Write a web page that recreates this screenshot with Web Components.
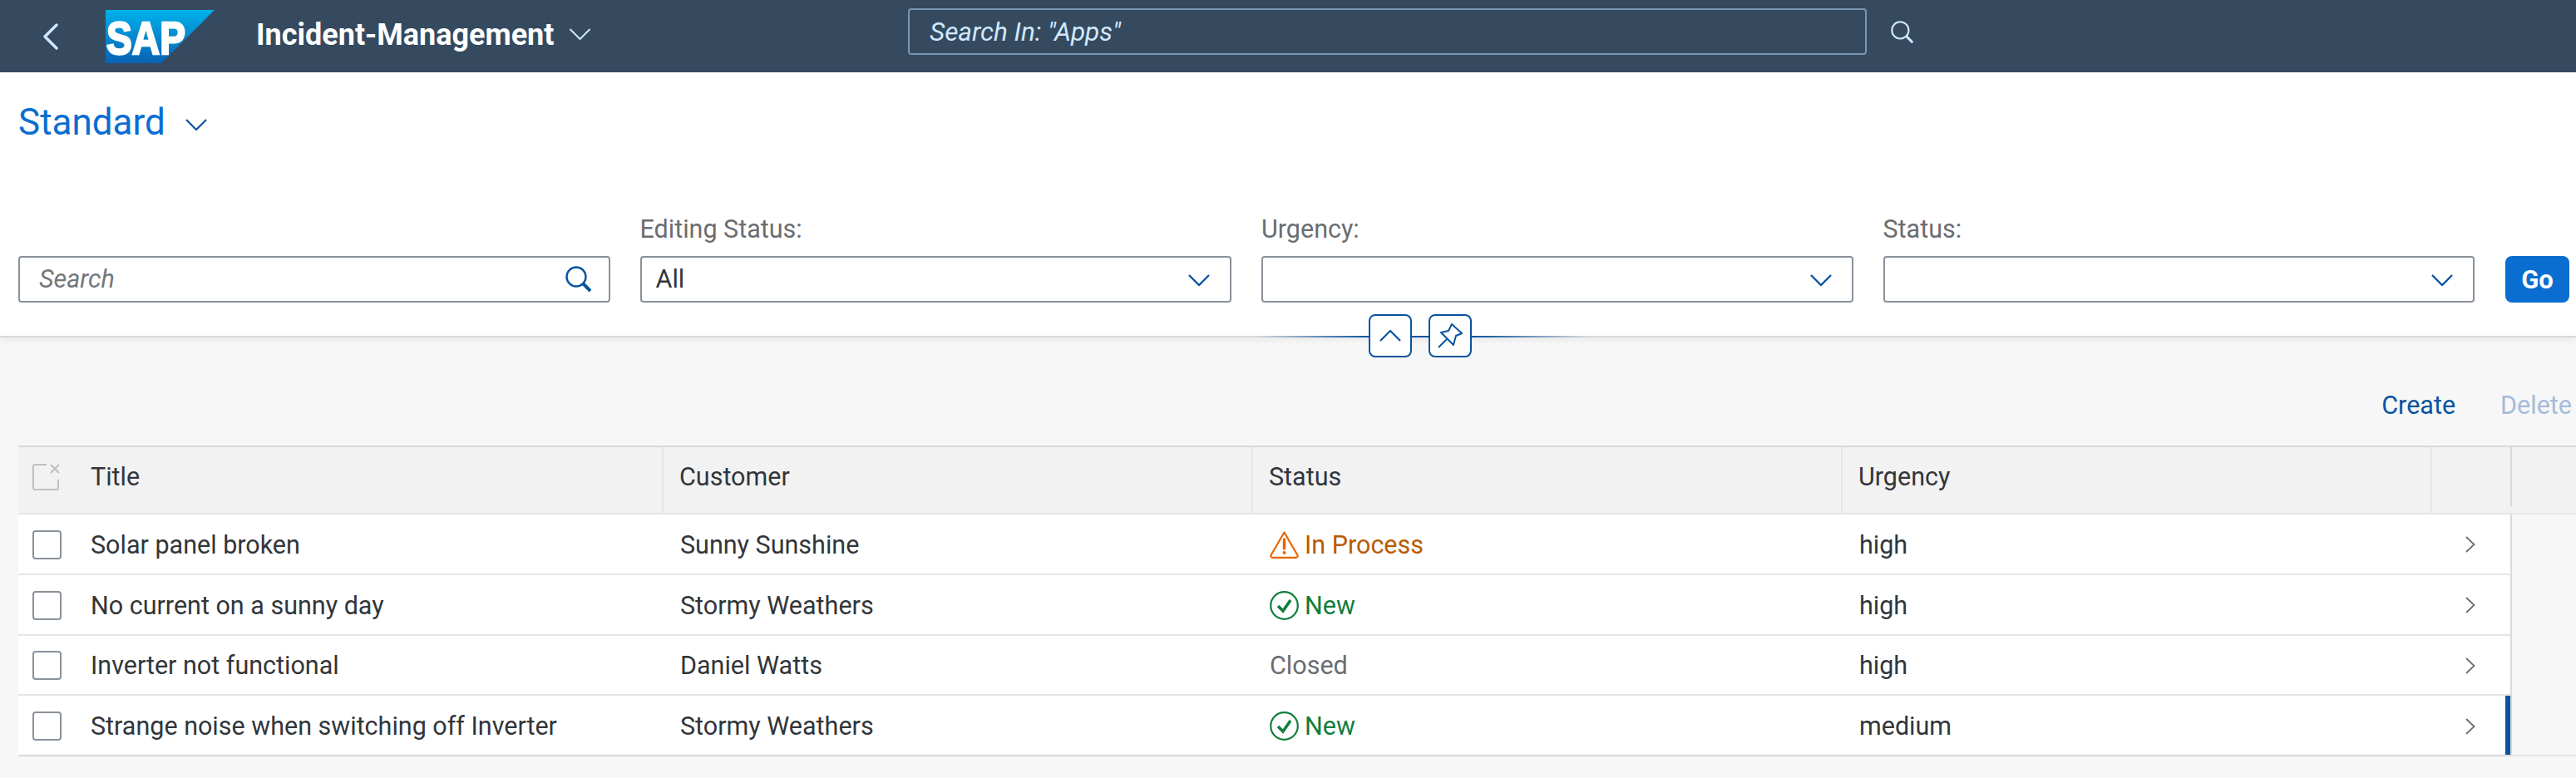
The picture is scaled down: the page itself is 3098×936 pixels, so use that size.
<!DOCTYPE html>
<html lang="en">
<head>
<meta charset="utf-8">
<title>Incident-Management</title>
<style>
    html, body { margin: 0; width: 3098px; height: 936px; overflow: hidden; background: #f7f7f7; }
    body { font-family: Roboto, "Liberation Sans", sans-serif; font-size: 30.5px; color: #32363a; }
</style>
</head>
<body>
<im-shell-bar app-title="Incident-Management" placeholder='Search In: "Apps"'></im-shell-bar>
<im-filter-header>
    <im-variant slot="variant">Standard</im-variant>
    <im-field slot="filters" placeholder="Search" icon="search"></im-field>
    <im-field slot="filters" label="Editing Status:" value="All" icon="down"></im-field>
    <im-field slot="filters" label="Urgency:" icon="down"></im-field>
    <im-field slot="filters" label="Status:" icon="down"></im-field>
</im-filter-header>
<im-toolbar></im-toolbar>
<im-table>
    <im-row head>
        <im-cell sel><im-check disabled></im-check></im-cell>
        <im-cell>Title</im-cell>
        <im-cell sep>Customer</im-cell>
        <im-cell sep>Status</im-cell>
        <im-cell sep>Urgency</im-cell>
        <im-cell sep></im-cell>
    </im-row>
    <im-row>
        <im-cell sel><im-check></im-check></im-cell>
        <im-cell>Solar panel broken</im-cell>
        <im-cell>Sunny Sunshine</im-cell>
        <im-cell><im-status type="warning">In Process</im-status></im-cell>
        <im-cell>high</im-cell>
        <im-cell><im-nav></im-nav></im-cell>
    </im-row>
    <im-row>
        <im-cell sel><im-check></im-check></im-cell>
        <im-cell>No current on a sunny day</im-cell>
        <im-cell>Stormy Weathers</im-cell>
        <im-cell><im-status type="success">New</im-status></im-cell>
        <im-cell>high</im-cell>
        <im-cell><im-nav></im-nav></im-cell>
    </im-row>
    <im-row>
        <im-cell sel><im-check></im-check></im-cell>
        <im-cell>Inverter not functional</im-cell>
        <im-cell>Daniel Watts</im-cell>
        <im-cell><im-status>Closed</im-status></im-cell>
        <im-cell>high</im-cell>
        <im-cell><im-nav></im-nav></im-cell>
    </im-row>
    <im-row highlight>
        <im-cell sel><im-check></im-check></im-cell>
        <im-cell>Strange noise when switching off Inverter</im-cell>
        <im-cell>Stormy Weathers</im-cell>
        <im-cell><im-status type="success">New</im-status></im-cell>
        <im-cell>medium</im-cell>
        <im-cell><im-nav></im-nav></im-cell>
    </im-row>
</im-table>

<script>
const icons = {
    search: (c, w) => `<svg viewBox="0 0 32 32" width="32" height="32" fill="none" stroke="${c}" stroke-width="${w}"><ellipse cx="13" cy="13" rx="11.5" ry="11.5"/><path d="M21 21l9 9" stroke-width="${w + 1.5}"/></svg>`,
    down: (c, w = 2.4) => `<svg viewBox="0 0 26 14" width="26" height="14" fill="none" stroke="${c}" stroke-width="${w}"><path d="M1 1l12 12L25 1"/></svg>`
};

class ImShellBar extends HTMLElement {
    constructor() {
        super();
        const title = this.getAttribute("app-title");
        const placeholder = this.getAttribute("placeholder");
        this.attachShadow({mode: "open"}).innerHTML = `
            <style>
                :host { display: flex; align-items: center; height: 87px; background: #354a5f; color: #fff; }
                #left { display: flex; align-items: center; flex: none; width: 1092px; }
                #back { width: 18px; height: 32px; margin-left: 52px; }
                #logo { width: 131px; height: 64px; margin-left: 57px; }
                #logo text { font-family: "Liberation Sans", sans-serif; font-weight: 700; }
                h1 { margin: -4px 0 0 50px; font-size: 36px; font-weight: 700; line-height: 40px; }
                #menu { margin-left: 18px; margin-top: -6px; }
                #search { box-sizing: border-box; display: flex; align-items: center; width: 1153px; height: 56px; align-self: flex-start; margin-top: 10px;
                    padding-left: 24px; border: 2px solid #7996b4; border-radius: 4px; font-size: 31.5px; font-style: italic; color: #d1e8ff; }
                #go { margin-left: 29px; margin-top: -10px; }
            </style>
            <div id="left">
                <svg id="back" viewBox="0 0 18 32" fill="none" stroke="#d1e8ff" stroke-width="3.4" stroke-linecap="round" stroke-linejoin="round"><path d="M16 2L2 16l14 14"/></svg>
                <svg id="logo" viewBox="0 0 131 64">
                    <defs><linearGradient id="sap" x1="0" y1="0" x2="0" y2="1"><stop offset="0" stop-color="#00b1eb"/><stop offset="1" stop-color="#0a62b4"/></linearGradient></defs>
                    <path d="M0 0H131L67 64H0z" fill="url(#sap)"/>
                    <text x="1" y="53" font-size="56" fill="#fff" stroke="#fff" stroke-width="2.5" textLength="95" lengthAdjust="spacingAndGlyphs">SAP</text>
                </svg>
                <h1>${title}</h1>
                <svg id="menu" viewBox="0 0 26 14" width="27" height="14" fill="none" stroke="#d1e8ff" stroke-width="2"><path d="M1 1l12 12L25 1"/></svg>
            </div>
            <div id="search">${placeholder}</div>
            <svg id="go" viewBox="0 0 32 32" width="28" height="28" fill="none" stroke="#d1e8ff" stroke-width="2.4"><circle cx="13" cy="13" r="11.5"/><path d="M21 21l9 9" stroke-width="3.4"/></svg>
        `;
    }
}
customElements.define("im-shell-bar", ImShellBar);

class ImVariant extends HTMLElement {
    constructor() {
        super();
        this.attachShadow({mode: "open"}).innerHTML = `
            <style>
                :host { display: flex; align-items: center; height: 60px; color: #0a6ed1; font-size: 44px; }
                svg { margin-left: 24px; margin-top: 6px; }
            </style>
            <slot></slot>
            ${icons.down("#0854a0", 2.2)}
        `;
    }
}
customElements.define("im-variant", ImVariant);

class ImField extends HTMLElement {
    constructor() {
        super();
        const label = this.getAttribute("label") || "";
        const value = this.getAttribute("value");
        const placeholder = this.getAttribute("placeholder");
        const icon = this.getAttribute("icon");
        this.attachShadow({mode: "open"}).innerHTML = `
            <style>
                :host { display: flex; flex-direction: column; justify-content: flex-end; }
                label { color: #6a6d70; line-height: 36px; margin-bottom: 14px; }
                #box { box-sizing: border-box; display: flex; align-items: center; justify-content: space-between; height: 56px;
                    padding: 0 24px 0 ${placeholder ? 23 : 17}px; background: #fff; border: 2px solid #89919a; border-radius: 4px; }
                #text { color: #32363a; margin-top: -1px; }
                #text.ph { color: #74777a; font-style: italic; }
                #box svg { flex: none; margin-top: ${icon === "down" ? 2 : 0}px; margin-right: ${icon === "search" ? -4 : 0}px; }
            </style>
            ${label ? `<label>${label}</label>` : ""}
            <div id="box">
                <span id="text" class="${placeholder ? "ph" : ""}">${placeholder || value || ""}</span>
                ${icon === "search" ? icons.search("#0854a0", 2.4) : icons.down("#0854a0")}
            </div>
        `;
    }
}
customElements.define("im-field", ImField);

class ImFilterHeader extends HTMLElement {
    constructor() {
        super();
        this.attachShadow({mode: "open"}).innerHTML = `
            <style>
                :host { display: block; position: relative; box-sizing: border-box; height: 319px; padding: 30px 8px 0 22px;
                    background: #fff; border-bottom: 2px solid #d9d9d9; box-shadow: 0 4px 6px rgba(0,0,0,.05); }
                #bar { display: flex; align-items: flex-end; margin-top: 81px; height: 120px; }
                #filters { flex: 1; display: grid; grid-template-columns: repeat(4, 711.5px); column-gap: 36px; align-items: end; height: 106px; padding-bottom: 14px; box-sizing: content-box; }
                #go { box-sizing: border-box; width: 77px; height: 56px; margin: 0 0 14px 0; background: #0a6ed1; color: #fff; border-radius: 8px;
                    display: flex; align-items: center; justify-content: center; font-weight: 700; font-size: 31px; }
                #line { position: absolute; left: 1510px; top: 317px; width: 400px; height: 2px;
                    background: linear-gradient(90deg, transparent, #0854a0 34%, #0854a0 66%, transparent); }
                .pill { position: absolute; top: 291px; box-sizing: border-box; width: 52px; height: 52px; display: flex; align-items: center; justify-content: center;
                    background: #fff; border: 2px solid #0854a0; border-radius: 8px; }
            </style>
            <slot name="variant"></slot>
            <div id="bar">
                <div id="filters"><slot name="filters"></slot></div>
                <div id="go">Go</div>
            </div>
            <div id="line"></div>
            <div class="pill" style="left:1646px"><svg viewBox="0 0 26 14" width="26" height="14" fill="none" stroke="#0854a0" stroke-width="2.2"><path d="M1 13L13 1l12 12"/></svg></div>
            <div class="pill" style="left:1718px"><svg viewBox="0 0 30 30" width="30" height="30" fill="none" stroke="#0854a0" stroke-width="2" stroke-linejoin="round"><path d="M17 1l12 11-7 3-3 11-15-15 9-2z"/><path d="M11 19L1 29"/></svg></div>
        `;
    }
}
customElements.define("im-filter-header", ImFilterHeader);

class ImToolbar extends HTMLElement {
    constructor() {
        super();
        this.attachShadow({mode: "open"}).innerHTML = `
            <style>
                :host { display: flex; justify-content: flex-end; align-items: center; gap: 54px; box-sizing: border-box; height: 130px;
                    padding: 33px 5px 0 0; }
                #create { color: #0854a0; }
                #delete { color: #a5bcdb; }
            </style>
            <span id="create">Create</span>
            <span id="delete">Delete</span>
        `;
    }
}
customElements.define("im-toolbar", ImToolbar);

class ImTable extends HTMLElement {
    constructor() {
        super();
        this.attachShadow({mode: "open"}).innerHTML = `
            <style>
                :host { display: block; margin-left: 22px; border-top: 2px solid #d9d9d9; }
            </style>
            <slot></slot>
        `;
    }
}
customElements.define("im-table", ImTable);

class ImRow extends HTMLElement {
    constructor() {
        super();
        this.attachShadow({mode: "open"}).innerHTML = `
            <style>
                :host { display: grid; position: relative; grid-template-columns: 66px 709px 709px 709px 709px 96px 1fr; box-sizing: border-box;
                    height: 72.75px; background: linear-gradient(90deg, #fff 2998px, #f7f7f7 2998px); }
                :host([head]) { height: 81px; padding-bottom: 10px; background: #f2f2f2; }
                #edge { grid-column: 7; grid-row: 1; margin-left: -1px; border-left: 2px solid #d9d9d9; }
                #rule { position: absolute; left: 0; bottom: 0; width: 2998px; height: 2px; background: #e5e5e5; }
                :host([head]) #rule { width: 100%; }
                :host(:last-child) #rule { width: 100%; background: linear-gradient(90deg, #d9d9d9 2998px, #e5e5e5 2998px); }
                #bar { display: none; }
                :host([highlight]) #bar { display: block; position: absolute; left: 2991px; top: 0; bottom: 2px; width: 6px; background: #0854a0; }
            </style>
            <slot></slot>
            <div id="edge"></div>
            <div id="bar"></div>
            <div id="rule"></div>
        `;
    }
}
customElements.define("im-row", ImRow);

class ImCell extends HTMLElement {
    constructor() {
        super();
        this.attachShadow({mode: "open"}).innerHTML = `
            <style>
                :host { display: flex; align-items: center; box-sizing: border-box; padding-left: 21px; min-width: 0; }
                :host([sel]) { padding-left: 17px; }
                :host([sep]) { border-left: 2px solid #e5e5e5; padding-left: 19px; margin-left: -1px; margin-bottom: -10px; padding-bottom: 10px; }
            </style>
            <slot></slot>
        `;
    }
}
customElements.define("im-cell", ImCell);

class ImCheck extends HTMLElement {
    constructor() {
        super();
        const disabled = this.hasAttribute("disabled");
        this.attachShadow({mode: "open"}).innerHTML = disabled ? `
            <style>:host { display: block; width: 34px; height: 32px; } svg { display: block; }</style>
            <svg viewBox="0 0 34 32" width="34" height="32" fill="none" stroke="#bfbfbf" stroke-width="2"><path d="M17 1H3a2 2 0 0 0-2 2v26a2 2 0 0 0 2 2h26a2 2 0 0 0 2-2V19"/><path d="M22 1l10 10M32 1L22 11"/></svg>
        ` : `
            <style>:host { display: block; box-sizing: border-box; width: 35px; height: 35px; background: #fff; border: 2px solid #89919a; border-radius: 4px; }</style>
        `;
    }
}
customElements.define("im-check", ImCheck);

class ImStatus extends HTMLElement {
    constructor() {
        super();
        const type = this.getAttribute("type");
        const glyph = type === "warning"
            ? `<svg viewBox="0 0 35 33" width="35" height="33" fill="none" stroke="#e76500" stroke-width="2.2" stroke-linejoin="round"><path d="M17.5 1.5L33.5 29a2 2 0 0 1-1.6 2.8H3.1A2 2 0 0 1 1.5 29z"/><path d="M17.5 10v11" stroke-width="3.4" stroke-linecap="round"/><circle cx="17.5" cy="26" r="2" fill="#e76500" stroke="none"/></svg>`
            : type === "success"
            ? `<svg viewBox="0 0 35 35" width="35" height="35" fill="none" stroke="#107e3e" stroke-width="2.2"><circle cx="17.5" cy="17.5" r="16.3"/><path d="M10 18l6 6 9-13" stroke-width="3.6"/></svg>`
            : "";
        this.attachShadow({mode: "open"}).innerHTML = `
            <style>
                :host { display: flex; align-items: center; gap: 7px; color: #6a6d70; }
                :host([type="warning"]) { color: #b95b05; }
                :host([type="success"]) { color: #107e3e; }
            </style>
            ${glyph}<slot></slot>
        `;
    }
}
customElements.define("im-status", ImStatus);

class ImNav extends HTMLElement {
    constructor() {
        super();
        this.attachShadow({mode: "open"}).innerHTML = `
            <style>:host { display: block; margin-left: 20px; height: 20px; } svg { display: block; }</style>
            <svg viewBox="0 0 12 20" width="12" height="20" fill="none" stroke="#6a6d70" stroke-width="1.8"><path d="M1 1l9.5 9L1 19"/></svg>
        `;
    }
}
customElements.define("im-nav", ImNav);
</script>
</body>
</html>
